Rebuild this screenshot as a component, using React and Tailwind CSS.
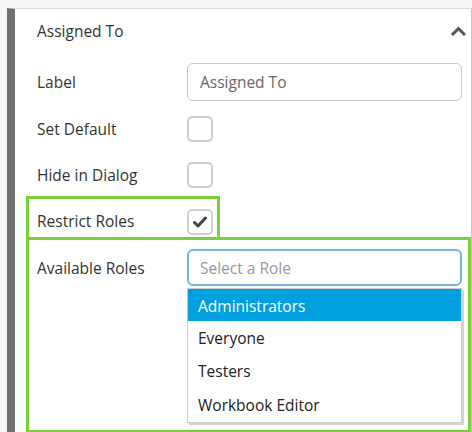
import React from "react";

const font = { fontFamily: "'Open Sans', 'Noto Sans', sans-serif" };

function Checkbox({ checked }) {
  return (
    <div className="w-[26px] h-[26px] rounded-[5px] border-2 border-[#cfcfcf] bg-white flex items-center justify-center">
      {checked && (
        <svg width="14" height="12" viewBox="0 0 14 12">
          <path d="M1.5 6.5 L5 10 L12.5 2" fill="none" stroke="#444" strokeWidth="3" strokeLinecap="round" strokeLinejoin="round" />
        </svg>
      )}
    </div>
  );
}

export default function App() {
  return (
    <div className="w-[472px] h-[432px] bg-[#f7f7f7] pt-2 pl-[7px] overflow-hidden text-[15.5px] text-[#333]" style={font}>
      <div className="h-[426px] bg-white border-l-8 border-l-[#707070] border-t border-t-[#dcdcdc] border-r border-r-[#c8c8c8] border-b border-b-[#d8d8d8] flex flex-col">
        <div className="h-[44px] flex items-center justify-between pl-[22px] pr-[5px]">
          <span className="pt-[2px]">Assigned To</span>
          <svg width="15" height="10" viewBox="0 0 15 10">
            <path d="M2 8 L7.5 2.5 L13 8" fill="none" stroke="#555" strokeWidth="3" strokeLinecap="square" />
          </svg>
        </div>
        <div className="mt-[10px] flex items-center pl-[22px]">
          <span className="w-[150px] pt-[2px]">Label</span>
          <div className="w-[275px] h-[38px] rounded-[6px] border border-[#c8c8c8] flex items-center px-3 pt-[2px] text-[#666]">Assigned To</div>
        </div>
        <div className="mt-[15px] flex items-center pl-[22px]">
          <span className="w-[150px] pt-[2px]">Set Default</span>
          <Checkbox />
        </div>
        <div className="mt-[20px] flex items-center pl-[22px]">
          <span className="w-[150px] pt-[2px]">Hide in Dialog</span>
          <Checkbox />
        </div>
        <div className="mt-[8px] ml-[11px] w-[194px] h-[44px] border-[3px] border-[#7ccf3c] flex items-end pb-[2px] pl-[8px]">
          <span className="w-[150px] self-center pt-[10px]">Restrict Roles</span>
          <Checkbox checked />
        </div>
        <div className="-mt-[3px] ml-[11px] flex-1 border-[3px] border-[#7ccf3c] flex pl-[8px] pt-[9px]">
          <span className="w-[150px] h-[37px] pt-[2px] flex items-center">Available Roles</span>
          <div className="flex flex-col">
            <div className="w-[275px] h-[37px] rounded-[6px] border-2 border-[#78b3e8] flex items-center px-[11px] pt-[2px] text-[#999]">Select a Role</div>
            <div className="mt-[2px] w-[275px] border border-[#cccccc] bg-white shadow-[2px_2px_0_#d4d4d4]">
              <div className="h-[32px] bg-[#00a0df] text-white flex items-center px-[10px] pt-[3px]">Administrators</div>
              <div className="h-[33px] flex items-center px-[10px] pt-[3px] text-[#222]">Everyone</div>
              <div className="h-[33px] flex items-center px-[10px] pt-[3px] text-[#222]">Testers</div>
              <div className="h-[35px] flex items-center px-[10px] pt-[3px] text-[#222]">Workbook Editor</div>
            </div>
          </div>
        </div>
      </div>
    </div>
  );
}
